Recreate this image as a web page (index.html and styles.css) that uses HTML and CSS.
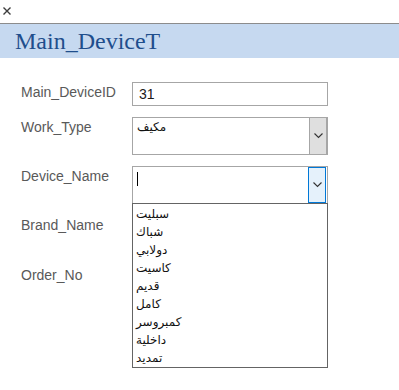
FILE: index.html
```html
<!DOCTYPE html>
<html lang="en">
<head>
  <meta charset="UTF-8">
  <meta name="viewport" content="width=device-width, initial-scale=1.0">
  <title>Main_DeviceT</title>
  <link rel="stylesheet" href="styles.css">
</head>

<body>
  <!-- Close bar -->
  <div class="topbar">
    <svg class="close" width="8" height="8" viewBox="0 0 8 8">
      <path d="M0.5 0.5 L7.5 7.5 M7.5 0.5 L0.5 7.5" stroke="#3c3c3c" stroke-width="1.4"/>
    </svg>
  </div>

  <!-- Form header -->
  <div class="header">
    <h1>Main_DeviceT</h1>
  </div>

  <div class="form">
    <div class="row">
      <span class="label">Main_DeviceID</span>
      <div class="textbox">31</div>
    </div>

    <div class="row">
      <span class="label">Work_Type</span>
      <div class="combo">
        <span class="combo-value">مكيف</span>
        <span class="combo-btn">
          <svg width="9" height="6" viewBox="0 0 9 6"><path d="M0.5 0.5 L4.5 4.5 L8.5 0.5" fill="none" stroke="#333" stroke-width="1.1"/></svg>
        </span>
      </div>
    </div>

    <div class="row">
      <span class="label">Device_Name</span>
      <div class="combo active">
        <span class="combo-value"><span class="caret"></span></span>
        <span class="combo-btn">
          <svg width="9" height="6" viewBox="0 0 9 6"><path d="M0.5 0.5 L4.5 4.5 L8.5 0.5" fill="none" stroke="#333" stroke-width="1.1"/></svg>
        </span>
      </div>

      <!-- Open list -->
      <ul class="dropdown">
        <li>سبليت</li>
        <li>شباك</li>
        <li>دولابي</li>
        <li>كاسيت</li>
        <li>قديم</li>
        <li>كامل</li>
        <li>كمبروسر</li>
        <li>داخلية</li>
        <li>تمديد</li>
      </ul>
    </div>

    <div class="row tall">
      <span class="label">Brand_Name</span>
    </div>

    <div class="row">
      <span class="label">Order_No</span>
    </div>
  </div>
</body>
</html>
```

FILE: styles.css
```css
body {
  font-family: 'Liberation Sans', Arial, sans-serif;
  margin: 0;
  padding: 0;
  background-color: #fff;
}

.topbar {
  height: 16px;
  padding: 7px 0 0 3px;
  border-bottom: 1px solid #8c8c8c;
}

.close {
  display: block;
}

.header {
  height: 34px;
  background-color: #c6d9f0;
  padding-left: 15px;
}

h1 {
  margin: 0;
  font-family: 'Liberation Serif', serif;
  font-weight: normal;
  font-size: 24px;
  line-height: 34px;
  color: #1f4e8c;
}

.form {
  padding: 24px 0 80px 21px;
}

.row {
  display: flex;
  align-items: flex-start;
  margin-bottom: 11px;
  position: relative;
}

.row.tall {
  min-height: 39px;
}

.label {
  width: 111px;
  padding-top: 2px;
  font-size: 14px;
  line-height: 17px;
  color: #595959;
}

.textbox {
  width: 188px;
  height: 22px;
  border: 1px solid #a6a6a6;
  padding-left: 6px;
  font-size: 14px;
  line-height: 22px;
  color: #1a1a1a;
}

.combo {
  width: 194px;
  height: 36px;
  border: 1px solid #a6a6a6;
  display: flex;
}

.combo-value {
  flex: 1;
  padding: 2px 0 0 4px;
  font-family: 'DejaVu Sans', sans-serif;
  font-size: 12px;
  line-height: 15px;
  color: #111;
}

.caret {
  display: block;
  width: 1px;
  height: 14px;
  margin: 3px 0 0 0;
  background-color: #000;
}

.combo-btn {
  width: 16px;
  background-color: #dfdfdf;
  border-left: 1px solid #a6a6a6;
  border-right: 1px solid #a6a6a6;
  display: flex;
  align-items: center;
  justify-content: center;
}

.combo.active .combo-btn {
  background-color: #e5f1fb;
  border: 1px solid #0078d7;
  margin: 0 1px 0 0;
}

.dropdown {
  position: absolute;
  top: 37px;
  left: 111px;
  width: 196px;
  height: 165px;
  margin: 0;
  padding: 1px 0 0 0;
  box-sizing: border-box;
  list-style: none;
  background: #fff;
  border: 1px solid #646464;
  z-index: 2;
}

.dropdown li {
  padding-left: 3px;
  font-family: 'DejaVu Sans', sans-serif;
  font-size: 12px;
  line-height: 18px;
  color: #111;
}
```
